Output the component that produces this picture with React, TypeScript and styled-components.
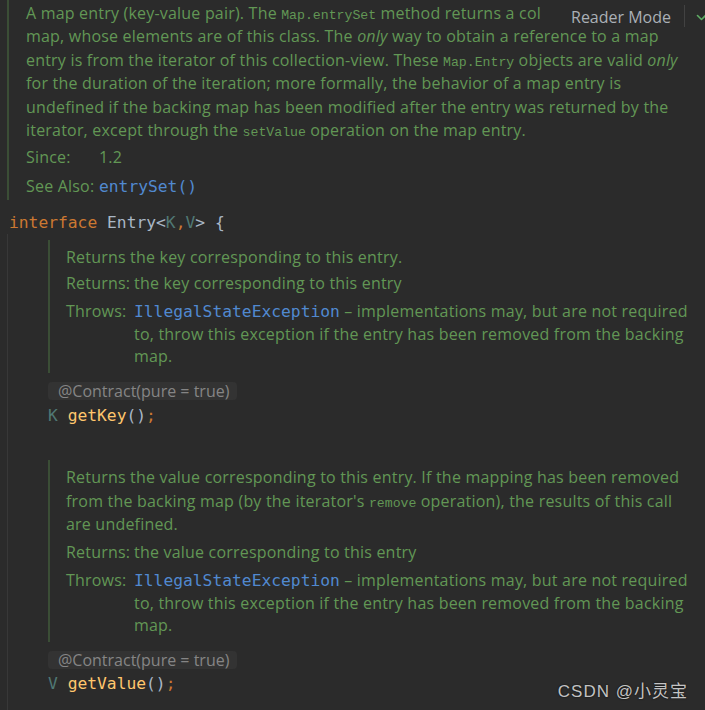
import React from 'react';
import styled, { createGlobalStyle } from 'styled-components';

const TEXT_FONT = `"Open Sans", "Noto Sans", sans-serif`;
const CODE_FONT = `"DejaVu Sans Mono", "Liberation Mono", monospace`;
const INLINE_CODE_FONT = `"Liberation Mono", "DejaVu Sans Mono", monospace`;

const GlobalStyle = createGlobalStyle`
  html, body { margin: 0; padding: 0; background: #2b2b2b; }
  body { overflow: hidden; }
`;

const Page = styled.div`
  position: relative;
  display: flex;
  flex-direction: column;
  width: 705px;
  height: 710px;
  overflow: hidden;
  background: #2b2b2b;
  font-family: ${TEXT_FONT};
  font-size: 16px;
  color: #629755;
`;

const DocComment = styled.div<{ $nested?: boolean }>`
  border-left: 2px solid #3b4e36;
  margin-left: ${(p) => (p.$nested ? '0' : '7px')};
  padding: ${(p) => (p.$nested ? '6px 0 5px 16px' : '2px 0 1px 17px')};
  align-self: stretch;
  letter-spacing: 0.2px;
`;

const Para = styled.div<{ $lh: number }>`
  line-height: ${(p) => p.$lh}px;
`;

const Line = styled.div<{ $pt?: number }>`
  white-space: nowrap;
  padding-top: ${(p) => p.$pt ?? 0}px;
`;

const InlineCode = styled.code`
  font-family: ${INLINE_CODE_FONT};
  font-size: 13.2px;
  line-height: 1;
  letter-spacing: 0;
`;

const Fields = styled.div<{ $label: number; $lh: number; $top: number }>`
  display: grid;
  grid-template-columns: ${(p) => p.$label}px 1fr;
  row-gap: 5.6px;
  margin-top: ${(p) => p.$top}px;
  line-height: ${(p) => p.$lh}px;
`;

const Label = styled.div`
  white-space: nowrap;
`;

const Value = styled.div`
  white-space: nowrap;
`;

const Link = styled.span`
  font-family: ${CODE_FONT};
  font-size: 16.3px;
  line-height: 1;
  letter-spacing: 0;
  color: #5189d0;
`;

const CodeLine = styled.div<{ $indent?: number; $top?: number }>`
  font-family: ${CODE_FONT};
  font-size: 16.3px;
  line-height: 23px;
  color: #a9b7c6;
  white-space: pre;
  padding-left: ${(p) => p.$indent ?? 0}px;
  margin-top: ${(p) => p.$top ?? 0}px;
`;

const Keyword = styled.span`
  color: #cc7832;
`;

const TypeParam = styled.span`
  color: #507874;
`;

const MethodName = styled.span`
  color: #ffc66d;
`;

const Members = styled.div`
  flex: 1;
  margin-left: 7px;
  border-left: 1px solid #383838;
  padding: 6px 0 0 40px;
  display: flex;
  flex-direction: column;
`;

const Member = styled.div<{ $top?: number }>`
  display: flex;
  flex-direction: column;
  align-items: flex-start;
  margin-top: ${(p) => p.$top ?? 0}px;
`;

const Badge = styled.div`
  margin-top: 9px;
  height: 18px;
  line-height: 18px;
  padding: 0 8px 0 10px;
  border-radius: 4px;
  background: #333333;
  color: #858585;
  font-size: 16px;
  white-space: nowrap;
`;

const ReaderBar = styled.div`
  position: absolute;
  top: 7px;
  left: 548px;
  right: 0;
  height: 18px;
  display: flex;
  align-items: center;
  padding-left: 23px;
  background: #2b2b2b;
  white-space: nowrap;
`;

const ReaderLabel = styled.span`
  font-size: 16px;
  line-height: 18px;
  padding-top: 1px;
  color: #aab0b6;
`;

const Divider = styled.span`
  width: 1px;
  height: 22px;
  margin-left: 13px;
  background: #424242;
  flex: none;
`;

const CheckIcon = styled.svg`
  flex: none;
  margin-left: 11px;
`;

const Watermark = styled.div`
  position: absolute;
  right: 17px;
  bottom: 8px;
  font-family: "Liberation Sans", "Noto Sans CJK SC", sans-serif;
  font-size: 17px;
  letter-spacing: 1px;
  color: rgba(235, 235, 235, 0.82);
  text-shadow: 0 0 2px rgba(0, 0, 0, 0.8);
  white-space: nowrap;
`;

const Throws = () => (
  <>
    <Label>Throws:</Label>
    <Value>
      <Line>
        <Link>IllegalStateException</Link> – implementations may, but are not required
      </Line>
      <Line>to, throw this exception if the entry has been removed from the backing</Line>
      <Line>map.</Line>
    </Value>
  </>
);

export default function App() {
  return (
    <>
      <GlobalStyle />
      <Page>
        <DocComment>
          <Para $lh={23.4}>
            <Line>
              A map entry (key-value pair). The <InlineCode>Map.entrySet</InlineCode> method returns a col
            </Line>
            <Line>
              map, whose elements are of this class. The <i>only</i> way to obtain a reference to a map
            </Line>
            <Line>
              entry is from the iterator of this collection-view. These <InlineCode>Map.Entry</InlineCode> objects are valid <i>only</i>
            </Line>
            <Line>for the duration of the iteration; more formally, the behavior of a map entry is</Line>
            <Line>undefined if the backing map has been modified after the entry was returned by the</Line>
            <Line>
              iterator, except through the <InlineCode>setValue</InlineCode> operation on the map entry.
            </Line>
          </Para>
          <Fields $label={73} $lh={23.4} $top={4}>
            <Label>Since:</Label>
            <Value>1.2</Value>
            <Label>See Also:</Label>
            <Value>
              <Link>entrySet()</Link>
            </Value>
          </Fields>
        </DocComment>

        <CodeLine $indent={9} $top={11}>
          <Keyword>interface</Keyword> Entry&lt;<TypeParam>K</TypeParam>
          <Keyword>,</Keyword>
          <TypeParam>V</TypeParam>&gt; {'{'}
        </CodeLine>

        <Members>
          <Member>
            <DocComment $nested>
              <Para $lh={22.5}>
                <Line>Returns the key corresponding to this entry.</Line>
              </Para>
              <Fields $label={68} $lh={22.5} $top={4}>
                <Label>Returns:</Label>
                <Value>the key corresponding to this entry</Value>
                <Throws />
              </Fields>
            </DocComment>
            <Badge>@Contract(pure = true)</Badge>
            <CodeLine $top={4}>
              <TypeParam>K</TypeParam> <MethodName>getKey</MethodName>()<Keyword>;</Keyword>
            </CodeLine>
          </Member>

          <Member $top={32.7}>
            <DocComment $nested>
              <Para $lh={22.5}>
                <Line>Returns the value corresponding to this entry. If the mapping has been removed</Line>
                <Line $pt={2}>
                  from the backing map (by the iterator's <InlineCode>remove</InlineCode> operation), the results of this call
                </Line>
                <Line>are undefined.</Line>
              </Para>
              <Fields $label={68} $lh={22.5} $top={6}>
                <Label>Returns:</Label>
                <Value>the value corresponding to this entry</Value>
                <Throws />
              </Fields>
            </DocComment>
            <Badge>@Contract(pure = true)</Badge>
            <CodeLine $top={3}>
              <TypeParam>V</TypeParam> <MethodName>getValue</MethodName>()<Keyword>;</Keyword>
            </CodeLine>
          </Member>
        </Members>

        <ReaderBar>
          <ReaderLabel>Reader Mode</ReaderLabel>
          <Divider />
          <CheckIcon width="16" height="16" viewBox="0 0 16 16" fill="none">
            <path d="M1.5 7.5 L5.5 11.5 L14 3" stroke="#5fad65" strokeWidth="1.6" strokeLinecap="round" strokeLinejoin="round" />
          </CheckIcon>
        </ReaderBar>

        <Watermark>CSDN @小灵宝</Watermark>
      </Page>
    </>
  );
}
